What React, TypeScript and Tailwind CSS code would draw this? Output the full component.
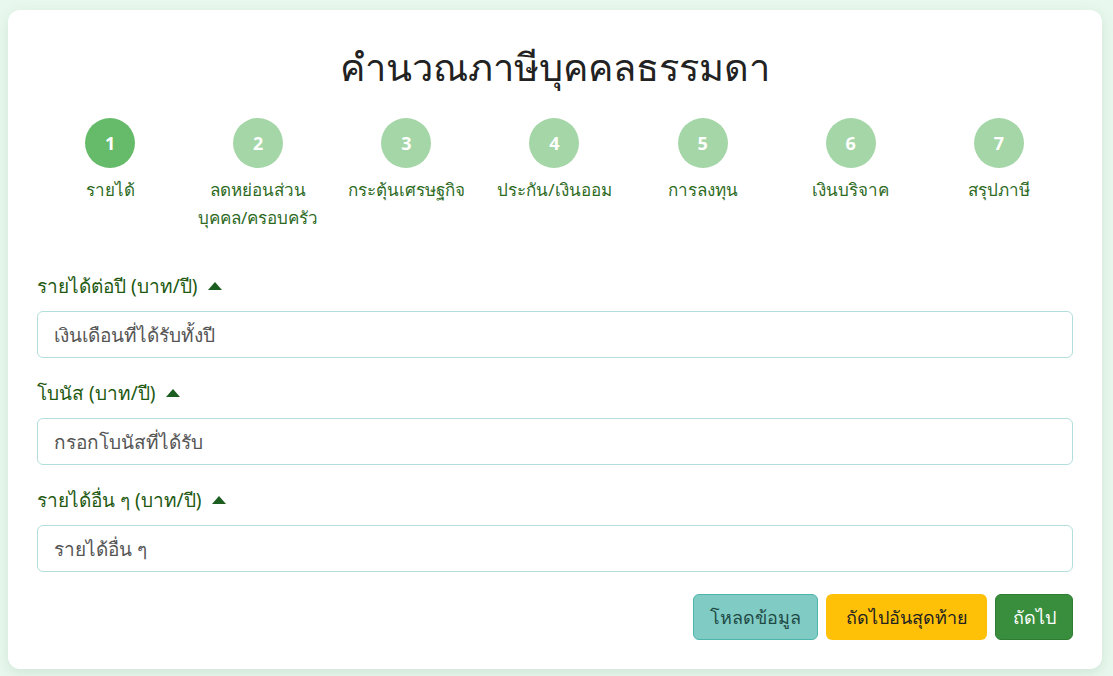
const steps = [
  { n: 1, label: "รายได้" },
  { n: 2, label: "ลดหย่อนส่วน\nบุคคล/ครอบครัว" },
  { n: 3, label: "กระตุ้นเศรษฐกิจ" },
  { n: 4, label: "ประกัน/เงินออม" },
  { n: 5, label: "การลงทุน" },
  { n: 6, label: "เงินบริจาค" },
  { n: 7, label: "สรุปภาษี" },
];

const fields = [
  { label: "รายได้ต่อปี (บาท/ปี)", placeholder: "เงินเดือนที่ได้รับทั้งปี" },
  { label: "โบนัส (บาท/ปี)", placeholder: "กรอกโบนัสที่ได้รับ" },
  { label: "รายได้อื่น ๆ (บาท/ปี)", placeholder: "รายได้อื่น ๆ" },
];

export default function App() {
  return (
    <div className="min-h-screen bg-[#e9f8ee] px-2 pt-[10px] pb-2 font-['Noto_Sans',sans-serif]">
      <div className="bg-white rounded-xl shadow-[0_4px_14px_rgba(60,120,80,0.15)] px-[29px] pt-[29px] pb-[29px] w-[1094px]">
        <h1 className="text-center text-[38px] leading-[54px] text-[#222]">คำนวณภาษีบุคคลธรรมดา</h1>

        {/* Steps */}
        <div className="grid grid-cols-7 mt-[25px] -ml-px">
          {steps.map((s) => (
            <div key={s.n} className="flex flex-col items-center">
              <div
                className={
                  s.n === 1
                    ? "w-[50px] h-[50px] rounded-full bg-[#66bb6a] text-white font-bold text-lg flex items-center justify-center"
                    : "w-[50px] h-[50px] rounded-full bg-[#a5d6a7] text-white font-bold text-lg flex items-center justify-center"
                }
              >
                {s.n}
              </div>
              <div className="mt-[8px] text-center text-[17px] leading-[28px] text-[#2e6b1f] whitespace-pre-line">
                {s.label}
              </div>
            </div>
          ))}
        </div>

        {/* Fields */}
        <div className="mt-[41px] flex flex-col gap-[22px]">
          {fields.map((f) => (
            <div key={f.label}>
              <div className="flex items-center gap-[10px] text-[19px] leading-[26px] text-[#1f5a12]">
                <span>{f.label}</span>
                <svg width="16" height="10" viewBox="0 0 16 10">
                  <path d="M8 1 L15 9 L1 9 Z" fill="#1b5e20" />
                </svg>
              </div>
              <input
                className="mt-[12px] w-full h-[47px] rounded-md border border-[#b2dfdb] px-4 text-[19px] text-[#333] placeholder:text-[#555] outline-none"
                placeholder={f.placeholder}
              />
            </div>
          ))}
        </div>

        {/* Buttons */}
        <div className="mt-[22px] flex justify-end gap-2">
          <button className="h-[46px] w-[125px] rounded-md bg-[#80cbc4] border border-[#4db6ac] text-[18px] text-[#1f4a44]">
            โหลดข้อมูล
          </button>
          <button className="h-[46px] w-[161px] rounded-md bg-[#ffc107] text-[18px] text-[#222]">
            ถัดไปอันสุดท้าย
          </button>
          <button className="h-[46px] w-[78px] rounded-md bg-[#388e3c] border border-[#2e7d32] text-[18px] text-white">
            ถัดไป
          </button>
        </div>
      </div>
    </div>
  );
}
